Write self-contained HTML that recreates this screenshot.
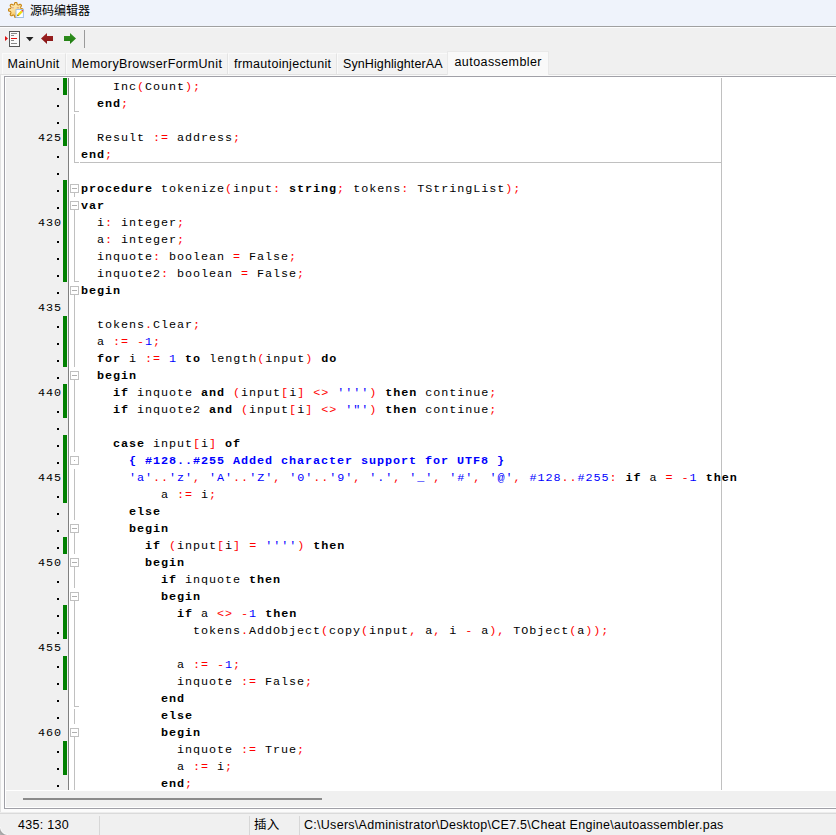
<!DOCTYPE html>
<html lang="zh-CN">
<head>
<meta charset="utf-8">
<title>源码编辑器</title>
<style>
*{box-sizing:border-box;margin:0;padding:0}
html,body{width:836px;height:835px;overflow:hidden;background:#f0f0f0}
body{position:relative;font-family:"Liberation Sans","Noto Sans CJK SC",sans-serif;font-size:12px;color:#000}
.abs{position:absolute}
#title{left:0;top:0;width:836px;height:26px;background:#eff3fb}
#title .txt{left:30px;top:2px;font-size:12px;line-height:18px;white-space:nowrap}
#tline{left:0;top:26px;width:836px;height:1px;background:#a0a0a0}
#tline2{left:0;top:27px;width:836px;height:1px;background:#fdfdfd}
#toolbar{left:0;top:28px;width:836px;height:23px;background:#f0f0f0}
#tabs{left:0;top:51px;width:836px;height:24px}
.tab{position:absolute;top:2px;height:22px;background:#f3f3f3;border-left:1px solid #fafafa;border-right:1px solid #e4e4e4;border-top:1px solid #fafafa;white-space:nowrap;line-height:14px;font-size:12.5px}
.tab span{position:absolute;top:3px;left:0;display:inline-block;transform-origin:0 50%}
.tab.sel{top:0;height:24px;background:#f9f9f9;border:1px solid #e9e9e9;border-bottom:none;z-index:2}
#tabbody{left:0;top:74px;width:840px;height:738px;background:#fbfbfb;border-top:1px solid #e2e2e2;border-left:1px solid #e2e2e2}
#edborder{left:4px;top:76px;width:840px;height:733px;border:1px solid #a0a0a7;background:#fff}
#gutter{left:6px;top:78px;width:62px;height:712px;background:#f0f0f0;overflow:hidden}
#gsep{left:68px;top:78px;width:1px;height:712px;background:#808080}
#code{left:69px;top:78px;width:767px;height:712px;background:#fff;overflow:hidden}
.ln{position:absolute;left:12px;height:17px;line-height:17px;white-space:pre;font-family:"Liberation Mono",monospace;font-size:11.75px;letter-spacing:0.95px;color:#000;margin-top:1px}
.ln b{font-weight:bold}
.ln i{font-style:normal}
.r{color:#f00}
.s{color:#00f}
.c{color:#00f}
.num{position:absolute;left:32px;width:24px;height:17px;line-height:17px;font-family:"Liberation Mono",monospace;font-size:11.75px;letter-spacing:0.95px;color:#000;white-space:pre;margin-top:1px}
.dot{position:absolute;left:51px;width:2px;height:2px;background:#000}
.gr{position:absolute;left:57px;width:4px;background:#008000}
.fv{position:absolute;left:5px;width:1px;background:#c0c0c0}
.ft{position:absolute;left:5px;width:5px;height:1px;background:#c0c0c0}
.fb{position:absolute;left:1px;width:9px;height:9px;border:1px solid #c0c0c0;background:#fff}
.fb s{position:absolute;left:1px;top:3px;width:5px;height:1px;background:#b0b0b0}
.fb.fd s{left:3px;top:3px;width:1px;height:1px}
#margin{left:721px;top:78px;width:1px;height:712px;background:#c0c0c0}
#sepline{left:80px;top:162px;width:641px;height:1px;background:#c0c0c0}
#hsep{left:6px;top:790px;width:830px;height:1px;background:#fff}
#hscroll{left:6px;top:791px;width:830px;height:16px;background:#f0f0f0}
#corner{left:0;top:827px;width:8px;height:8px;background:radial-gradient(circle at 8px 0px,rgba(240,240,240,0) 6.5px,#f8f8f8 7.5px,#a2a2a2 8.6px,#b4b4b4 11px)}
#thumb{left:23px;top:798px;width:299px;height:2px;background:#8b8b8b}
#status{left:0;top:812px;width:836px;height:23px;background:#f0f0f0;border-top:1px solid #ececec}
#status:before{content:"";position:absolute;left:0;top:0;width:836px;height:1px;background:#dadada}
#status .t{position:absolute;top:5px;line-height:14px;font-size:12.5px;letter-spacing:.28px;white-space:nowrap}
#status .d{position:absolute;top:3px;width:1px;height:20px;background:#d7d7d7}
</style>
</head>
<body>
<div id="title" class="abs">
<svg class="abs" style="left:7px;top:1px" width="18" height="18" viewBox="0 0 18 18">
<defs><linearGradient id="gg" x1="0.2" y1="0" x2="0.8" y2="1"><stop offset="0" stop-color="#fff0c4"/><stop offset="0.5" stop-color="#fbdc92"/><stop offset="1" stop-color="#f3ae2c"/></linearGradient></defs>
<path d="M16.07 9.00 L16.06 9.29 L16.02 9.59 L15.92 9.87 L15.63 10.11 L15.03 10.28 L14.43 10.39 L14.13 10.55 L13.99 10.74 L13.90 10.94 L13.82 11.14 L13.74 11.35 L13.67 11.56 L13.63 11.79 L13.74 12.12 L14.08 12.64 L14.39 13.19 L14.43 13.57 L14.31 13.85 L14.14 14.09 L13.94 14.30 L13.73 14.50 L13.51 14.68 L13.24 14.80 L12.86 14.76 L12.33 14.45 L11.83 14.09 L11.51 13.98 L11.28 14.02 L11.08 14.09 L10.88 14.17 L10.68 14.26 L10.49 14.35 L10.30 14.50 L10.15 14.81 L10.04 15.42 L9.88 16.04 L9.64 16.34 L9.37 16.45 L9.09 16.49 L8.80 16.50 L8.51 16.49 L8.23 16.45 L7.96 16.34 L7.72 16.04 L7.56 15.42 L7.45 14.81 L7.30 14.50 L7.11 14.35 L6.92 14.26 L6.72 14.17 L6.52 14.09 L6.32 14.02 L6.09 13.98 L5.77 14.09 L5.27 14.45 L4.74 14.76 L4.36 14.80 L4.09 14.68 L3.87 14.50 L3.66 14.30 L3.46 14.09 L3.29 13.85 L3.17 13.57 L3.21 13.19 L3.52 12.64 L3.86 12.12 L3.97 11.79 L3.93 11.56 L3.86 11.35 L3.78 11.14 L3.70 10.94 L3.61 10.74 L3.47 10.55 L3.17 10.39 L2.57 10.28 L1.97 10.11 L1.68 9.87 L1.58 9.59 L1.54 9.29 L1.53 9.00 L1.54 8.71 L1.58 8.41 L1.68 8.13 L1.97 7.89 L2.57 7.72 L3.17 7.61 L3.47 7.45 L3.61 7.26 L3.70 7.06 L3.78 6.86 L3.86 6.65 L3.93 6.44 L3.97 6.21 L3.86 5.88 L3.52 5.36 L3.21 4.81 L3.17 4.43 L3.29 4.15 L3.46 3.91 L3.66 3.70 L3.87 3.50 L4.09 3.32 L4.36 3.20 L4.74 3.24 L5.27 3.55 L5.77 3.91 L6.09 4.02 L6.32 3.98 L6.52 3.91 L6.72 3.83 L6.92 3.74 L7.11 3.65 L7.30 3.50 L7.45 3.19 L7.56 2.58 L7.72 1.96 L7.96 1.66 L8.23 1.55 L8.51 1.51 L8.80 1.50 L9.09 1.51 L9.37 1.55 L9.64 1.66 L9.88 1.96 L10.04 2.58 L10.15 3.19 L10.30 3.50 L10.49 3.65 L10.68 3.74 L10.88 3.83 L11.08 3.91 L11.28 3.98 L11.51 4.02 L11.83 3.91 L12.33 3.55 L12.86 3.24 L13.24 3.20 L13.51 3.32 L13.73 3.50 L13.94 3.70 L14.14 3.91 L14.31 4.15 L14.43 4.43 L14.39 4.81 L14.08 5.36 L13.74 5.88 L13.63 6.21 L13.67 6.44 L13.74 6.65 L13.82 6.86 L13.90 7.06 L13.99 7.26 L14.13 7.45 L14.43 7.61 L15.03 7.72 L15.63 7.89 L15.92 8.13 L16.02 8.41 L16.06 8.71z" fill="url(#gg)" stroke="#c88412" stroke-width="1.1" stroke-linejoin="round"/>
<path d="M4.600 6.800h2.200M9.800 6.800h2.200" stroke="#b0566a" stroke-width=".7" opacity=".7"/>
<rect x="9" y="8.500" width="7.400" height="8" fill="#fff" stroke="#9fc1e6" stroke-width="1"/>
<path d="M10.300 14.900l.6-1.800 3.300-3.400 1.300 1.300-3.300 3.400z" fill="#f6e600" stroke="#d9b400" stroke-width=".4"/>
<path d="M10.300 14.900l.5-1.400.9.900z" fill="#333"/>
<path d="M14.400 9.500l.8-.8 1.300 1.300-.8.8z" fill="#ea2030"/>
</svg>
<div class="abs txt">源码编辑器</div>
</div>
<div id="tline" class="abs"></div>
<div id="tline2" class="abs"></div>
<div id="toolbar" class="abs">
<svg class="abs" style="left:0;top:0" width="100" height="23" viewBox="0 28 100 23">
<defs><linearGradient id="ra" x1="0" y1="0" x2="0" y2="1"><stop offset="0" stop-color="#a02424"/><stop offset="1" stop-color="#861414"/></linearGradient><linearGradient id="ga" x1="0" y1="0" x2="0" y2="1"><stop offset="0" stop-color="#349422"/><stop offset="1" stop-color="#1e7a10"/></linearGradient></defs>
<path d="M5 36l3 2.500L5 41z" fill="#e01010"/>
<rect x="9.500" y="31.500" width="10" height="15" fill="#fafafa" stroke="#555" stroke-width="1"/>
<path d="M11 33.500h6M11 35.500h3M11 40.500h3M11 43.500h6" stroke="#888" stroke-width="1"/>
<path d="M11 38.500h6" stroke="#e01010" stroke-width="1"/>
<path d="M26 37h7.500l-3.750 4.200z" fill="#222"/>
<path d="M41 38.500l6-5.500v3h6v5h-6v3z" fill="url(#ra)"/>
<path d="M76 38.500l-6-5.500v3h-6v5h6v3z" fill="url(#ga)"/>
<path d="M84.500 30v18" stroke="#9a9a9a" stroke-width="1"/>
</svg>
</div>
<div id="tabs" class="abs">
<div class="tab" style="left:2px;width:64px"><span style="left:4.5px;letter-spacing:.36px">MainUnit</span></div>
<div class="tab" style="left:66px;width:162px"><span style="left:4.5px;letter-spacing:.4px">MemoryBrowserFormUnit</span></div>
<div class="tab" style="left:228px;width:109px"><span style="left:5px;letter-spacing:.33px">frmautoinjectunit</span></div>
<div class="tab" style="left:337px;width:111px"><span style="left:5px;letter-spacing:.1px">SynHighlighterAA</span></div>
<div class="tab sel" style="left:447px;width:102px"><span style="left:6.5px;letter-spacing:.42px">autoassembler</span></div>
</div>
<div id="tabbody" class="abs"></div>
<div id="edborder" class="abs"></div>
<div id="gutter" class="abs">
<div class="gr" style="top:0px;height:17px"></div>
<div class="gr" style="top:51px;height:17px"></div>
<div class="gr" style="top:102px;height:102px"></div>
<div class="gr" style="top:238px;height:51px"></div>
<div class="gr" style="top:306px;height:34px"></div>
<div class="gr" style="top:357px;height:68px"></div>
<div class="gr" style="top:459px;height:17px"></div>
<div class="gr" style="top:527px;height:34px"></div>
<div class="gr" style="top:578px;height:34px"></div>
<div class="gr" style="top:663px;height:34px"></div>
<div class="dot" style="top:10px"></div>
<div class="dot" style="top:27px"></div>
<div class="dot" style="top:44px"></div>
<div class="num" style="top:51px">425</div>
<div class="dot" style="top:78px"></div>
<div class="dot" style="top:95px"></div>
<div class="dot" style="top:112px"></div>
<div class="dot" style="top:129px"></div>
<div class="num" style="top:136px">430</div>
<div class="dot" style="top:163px"></div>
<div class="dot" style="top:180px"></div>
<div class="dot" style="top:197px"></div>
<div class="dot" style="top:214px"></div>
<div class="num" style="top:221px">435</div>
<div class="dot" style="top:248px"></div>
<div class="dot" style="top:265px"></div>
<div class="dot" style="top:282px"></div>
<div class="dot" style="top:299px"></div>
<div class="num" style="top:306px">440</div>
<div class="dot" style="top:333px"></div>
<div class="dot" style="top:350px"></div>
<div class="dot" style="top:367px"></div>
<div class="dot" style="top:384px"></div>
<div class="num" style="top:391px">445</div>
<div class="dot" style="top:418px"></div>
<div class="dot" style="top:435px"></div>
<div class="dot" style="top:452px"></div>
<div class="dot" style="top:469px"></div>
<div class="num" style="top:476px">450</div>
<div class="dot" style="top:503px"></div>
<div class="dot" style="top:520px"></div>
<div class="dot" style="top:537px"></div>
<div class="dot" style="top:554px"></div>
<div class="num" style="top:561px">455</div>
<div class="dot" style="top:588px"></div>
<div class="dot" style="top:605px"></div>
<div class="dot" style="top:622px"></div>
<div class="dot" style="top:639px"></div>
<div class="num" style="top:646px">460</div>
<div class="dot" style="top:673px"></div>
<div class="dot" style="top:690px"></div>
<div class="dot" style="top:707px"></div>
</div>
<div id="gsep" class="abs"></div>
<div id="code" class="abs">
<div class="fv" style="top:0px;height:34px"></div>
<div class="fv" style="top:36px;height:49px"></div>
<div class="fv" style="top:115px;height:4px"></div>
<div class="fv" style="top:132px;height:72px"></div>
<div class="fv" style="top:217px;height:72px"></div>
<div class="fv" style="top:302px;height:72px"></div>
<div class="fv" style="top:391px;height:51px"></div>
<div class="fv" style="top:455px;height:21px"></div>
<div class="fv" style="top:489px;height:21px"></div>
<div class="fv" style="top:523px;height:106px"></div>
<div class="fv" style="top:631px;height:15px"></div>
<div class="fv" style="top:659px;height:55px"></div>
<div class="ft" style="top:33px"></div>
<div class="ft" style="top:84px"></div>
<div class="ft" style="top:203px"></div>
<div class="ft" style="top:628px"></div>
<div class="fb" style="top:106px"><s></s></div>
<div class="fb" style="top:123px"><s></s></div>
<div class="fb" style="top:208px"><s></s></div>
<div class="fb" style="top:293px"><s></s></div>
<div class="fb fd" style="top:378px"><s></s></div>
<div class="fb" style="top:446px"><s></s></div>
<div class="fb" style="top:480px"><s></s></div>
<div class="fb" style="top:514px"><s></s></div>
<div class="fb" style="top:650px"><s></s></div>
<div class="ln" style="top:0px">    Inc<i class="r">(</i>Count<i class="r">);</i></div>
<div class="ln" style="top:17px">  <b>end</b><i class="r">;</i></div>
<div class="ln" style="top:34px"></div>
<div class="ln" style="top:51px">  Result <i class="r">:=</i> address<i class="r">;</i></div>
<div class="ln" style="top:68px"><b>end</b><i class="r">;</i></div>
<div class="ln" style="top:85px"></div>
<div class="ln" style="top:102px"><b>procedure</b> tokenize<i class="r">(</i>input<i class="r">:</i> <b>string</b><i class="r">;</i> tokens<i class="r">:</i> TStringList<i class="r">);</i></div>
<div class="ln" style="top:119px"><b>var</b></div>
<div class="ln" style="top:136px">  i<i class="r">:</i> integer<i class="r">;</i></div>
<div class="ln" style="top:153px">  a<i class="r">:</i> integer<i class="r">;</i></div>
<div class="ln" style="top:170px">  inquote<i class="r">:</i> boolean <i class="r">=</i> False<i class="r">;</i></div>
<div class="ln" style="top:187px">  inquote2<i class="r">:</i> boolean <i class="r">=</i> False<i class="r">;</i></div>
<div class="ln" style="top:204px"><b>begin</b></div>
<div class="ln" style="top:221px"></div>
<div class="ln" style="top:238px">  tokens<i class="r">.</i>Clear<i class="r">;</i></div>
<div class="ln" style="top:255px">  a <i class="r">:=</i> <i class="r">-</i><i class="s">1</i><i class="r">;</i></div>
<div class="ln" style="top:272px">  <b>for</b> i <i class="r">:=</i> <i class="s">1</i> <b>to</b> length<i class="r">(</i>input<i class="r">)</i> <b>do</b></div>
<div class="ln" style="top:289px">  <b>begin</b></div>
<div class="ln" style="top:306px">    <b>if</b> inquote <b>and</b> <i class="r">(</i>input<i class="r">[</i>i<i class="r">]</i> <i class="r">&lt;&gt;</i> <i class="s">''''</i><i class="r">)</i> <b>then</b> continue<i class="r">;</i></div>
<div class="ln" style="top:323px">    <b>if</b> inquote2 <b>and</b> <i class="r">(</i>input<i class="r">[</i>i<i class="r">]</i> <i class="r">&lt;&gt;</i> <i class="s">'"'</i><i class="r">)</i> <b>then</b> continue<i class="r">;</i></div>
<div class="ln" style="top:340px"></div>
<div class="ln" style="top:357px">    <b>case</b> input<i class="r">[</i>i<i class="r">]</i> <b>of</b></div>
<div class="ln" style="top:374px">      <b class="c">{ #128..#255 Added character support for UTF8 }</b></div>
<div class="ln" style="top:391px">      <i class="s">'a'</i><i class="r">..</i><i class="s">'z'</i><i class="r">,</i> <i class="s">'A'</i><i class="r">..</i><i class="s">'Z'</i><i class="r">,</i> <i class="s">'0'</i><i class="r">..</i><i class="s">'9'</i><i class="r">,</i> <i class="s">'.'</i><i class="r">,</i> <i class="s">'_'</i><i class="r">,</i> <i class="s">'#'</i><i class="r">,</i> <i class="s">'@'</i><i class="r">,</i> <i class="s">#128</i><i class="r">..</i><i class="s">#255</i><i class="r">:</i> <b>if</b> a <i class="r">=</i> <i class="r">-</i><i class="s">1</i> <b>then</b></div>
<div class="ln" style="top:408px">          a <i class="r">:=</i> i<i class="r">;</i></div>
<div class="ln" style="top:425px">      <b>else</b></div>
<div class="ln" style="top:442px">      <b>begin</b></div>
<div class="ln" style="top:459px">        <b>if</b> <i class="r">(</i>input<i class="r">[</i>i<i class="r">]</i> <i class="r">=</i> <i class="s">''''</i><i class="r">)</i> <b>then</b></div>
<div class="ln" style="top:476px">        <b>begin</b></div>
<div class="ln" style="top:493px">          <b>if</b> inquote <b>then</b></div>
<div class="ln" style="top:510px">          <b>begin</b></div>
<div class="ln" style="top:527px">            <b>if</b> a <i class="r">&lt;&gt;</i> <i class="r">-</i><i class="s">1</i> <b>then</b></div>
<div class="ln" style="top:544px">              tokens<i class="r">.</i>AddObject<i class="r">(</i>copy<i class="r">(</i>input<i class="r">,</i> a<i class="r">,</i> i <i class="r">-</i> a<i class="r">),</i> TObject<i class="r">(</i>a<i class="r">));</i></div>
<div class="ln" style="top:561px"></div>
<div class="ln" style="top:578px">            a <i class="r">:=</i> <i class="r">-</i><i class="s">1</i><i class="r">;</i></div>
<div class="ln" style="top:595px">            inquote <i class="r">:=</i> False<i class="r">;</i></div>
<div class="ln" style="top:612px">          <b>end</b></div>
<div class="ln" style="top:629px">          <b>else</b></div>
<div class="ln" style="top:646px">          <b>begin</b></div>
<div class="ln" style="top:663px">            inquote <i class="r">:=</i> True<i class="r">;</i></div>
<div class="ln" style="top:680px">            a <i class="r">:=</i> i<i class="r">;</i></div>
<div class="ln" style="top:697px">          <b>end</b><i class="r">;</i></div>
</div>
<div id="margin" class="abs"></div>
<div id="sepline" class="abs"></div>
<div id="hsep" class="abs"></div>
<div id="hscroll" class="abs"></div>
<div id="thumb" class="abs"></div>
<div id="status" class="abs">
<div class="t" style="left:18px">435: 130</div>
<div class="d" style="left:99px"></div>
<div class="d" style="left:249px"></div>
<div class="t" style="left:254px">插入</div>
<div class="d" style="left:299px"></div>
<div class="t" style="left:304px">C:\Users\Administrator\Desktop\CE7.5\Cheat Engine\autoassembler.pas</div>
</div>
<div id="corner" class="abs"></div>
</body>
</html>
